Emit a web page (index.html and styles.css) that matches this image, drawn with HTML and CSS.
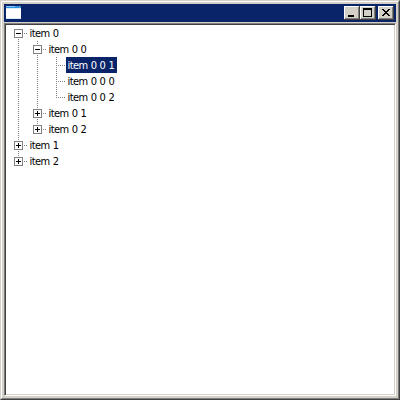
FILE: index.html
```
<!DOCTYPE html>
<html lang="en">
<head>
<meta charset="utf-8">
<title>Tree</title>
<link rel="stylesheet" href="styles.css">
</head>
<body>
<div class="window">
  <div class="frame">
    <header class="titlebar">
      <svg class="app-icon" width="16" height="16" viewBox="0 0 16 16" shape-rendering="crispEdges">
        <path fill="#fff" d="M1 1h15v13H1z"/>
        <path fill="#2a94e4" d="M1 1h15v2H1z"/>
        <path fill="#8cc8f4" d="M1 1h9v1H1z"/>
        <path fill="#d8ecfa" d="M1 3h15v1H1zM1 13h15v1H1z"/>
        <path fill="#d08070" d="M14 1h1v1h-1z"/>
      </svg>
      <div class="controls">
        <button class="control" aria-label="Minimize"><svg width="16" height="14" shape-rendering="crispEdges"><path d="M4 9h6v2H4z"/></svg></button>
        <button class="control" aria-label="Maximize"><svg width="16" height="14" shape-rendering="crispEdges"><path fill-rule="evenodd" d="M3 2h9v9H3zM4 4v6h7V4z"/></svg></button>
        <button class="control close" aria-label="Close"><svg width="16" height="14" shape-rendering="crispEdges"><path d="M4 3h2v1H4zM10 3h2v1h-2zM5 4h2v1H5zM9 4h2v1H9zM6 5h4v1H6zM7 6h2v1H7zM6 7h4v1H6zM5 8h2v1H5zM9 8h2v1H9zM4 9h2v1H4zM10 9h2v1h-2z"/></svg></button>
      </div>
    </header>
    <main class="client">
      <ul class="tree">
        <li class="node">
          <div class="row"><span class="toggle minus"></span><span class="stub"></span><span class="label">item 0</span></div>
          <ul>
            <li class="node">
              <div class="row"><span class="toggle minus"></span><span class="stub"></span><span class="label">item 0 0</span></div>
              <ul>
                <li class="node"><div class="row leaf"><span class="stub"></span><span class="label selected">item 0 0 1</span></div></li>
                <li class="node"><div class="row leaf"><span class="stub"></span><span class="label">item 0 0 0</span></div></li>
                <li class="node last"><div class="row leaf"><span class="stub"></span><span class="label">item 0 0 2</span></div></li>
              </ul>
            </li>
            <li class="node"><div class="row"><span class="toggle plus"></span><span class="stub"></span><span class="label">item 0 1</span></div></li>
            <li class="node last"><div class="row"><span class="toggle plus"></span><span class="stub"></span><span class="label">item 0 2</span></div></li>
          </ul>
        </li>
        <li class="node"><div class="row"><span class="toggle plus"></span><span class="stub"></span><span class="label">item 1</span></div></li>
        <li class="node last"><div class="row"><span class="toggle plus"></span><span class="stub"></span><span class="label">item 2</span></div></li>
      </ul>
    </main>
  </div>
</div>
</body>
</html>
```
FILE: styles.css
```
* { box-sizing: border-box; }
body { margin: 0; background: #d4d0c8; }
.window {
  height: 400px;
  border: 1px solid;
  border-color: #d4d0c8 #404040 #404040 #d4d0c8;
}
.frame {
  height: 100%;
  padding: 2px;
  display: flex;
  flex-direction: column;
  gap: 1px;
  background: #d4d0c8;
  border: 1px solid;
  border-color: #fff #808080 #808080 #fff;
}
.titlebar {
  height: 18px;
  padding: 0 2px 0 1px;
  display: flex;
  justify-content: space-between;
  align-items: center;
  background: #0a246a;
}
.controls { display: flex; }
.control {
  width: 16px;
  height: 14px;
  padding: 0;
  border: 0;
  background: #d4d0c8;
  box-shadow: inset -1px -1px #404040, inset 1px 1px #fff, inset -2px -2px #808080;
}
.control svg { display: block; }
.close { margin-left: 2px; }
.client {
  flex: 1;
  background: #fff;
  border: 1px solid;
  border-color: #808080 #fff #fff #808080;
  box-shadow: inset 1px 1px #404040, inset -1px -1px #d4d0c8;
  padding: 1px;
}
ul { margin: 0; padding: 0; list-style: none; }
.tree { padding-left: 8px; }
.node ul { padding-left: 19px; }
.node {
  background: repeating-linear-gradient(#808080 0 1px, transparent 1px 2px) 4px 0 / 1px 100% no-repeat;
}
.node.last { background-size: 1px 9px; }
.tree > .node:first-child { background-position: 4px 8px; }
.row {
  height: 16px;
  display: flex;
  align-items: center;
}
.toggle {
  width: 9px;
  height: 9px;
  margin-top: 1px;
  border: 1px solid #808080;
  background: linear-gradient(#000, #000) 1px 3px / 5px 1px no-repeat #fff;
}
.plus {
  background: linear-gradient(#000, #000) 1px 3px / 5px 1px no-repeat,
    linear-gradient(#000, #000) 3px 1px / 1px 5px no-repeat #fff;
}
.stub {
  width: 5px;
  height: 1px;
  margin-top: 1px;
  background: repeating-linear-gradient(90deg, transparent 0 1px, #808080 1px 2px);
}
.leaf .stub { margin-left: 4px; width: 10px; background: repeating-linear-gradient(90deg, #808080 0 1px, transparent 1px 2px); }
.label {
  height: 16px;
  padding: 1px 2.5px 0 1.5px;
  font: 11px/16px "DejaVu Sans Condensed", "DejaVu Sans", sans-serif;
  font-stretch: condensed;
  letter-spacing: -0.55px;
  word-spacing: 0.5px;
  color: #000;
  white-space: pre;
}
.selected { background: #0a246a; color: #fff; }
```
